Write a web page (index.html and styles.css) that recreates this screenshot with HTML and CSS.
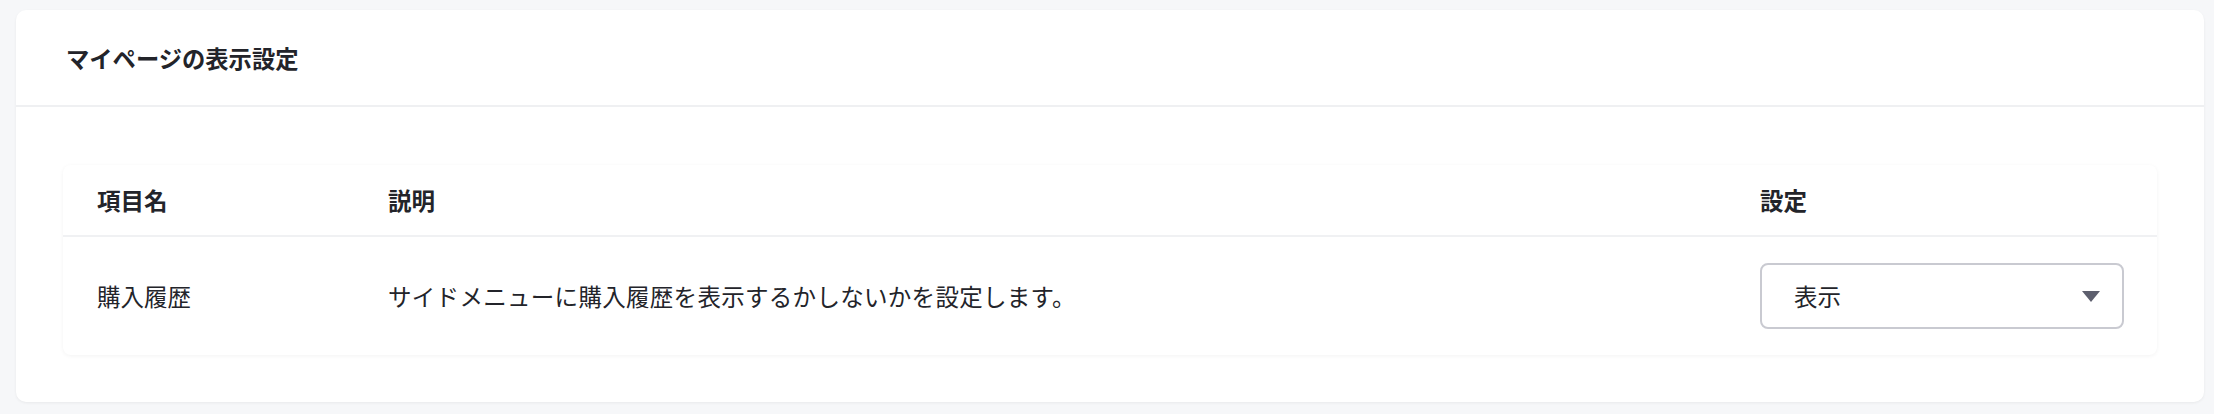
FILE: index.html
```html
<!DOCTYPE html>
<html lang="ja">
<head>
    <meta charset="UTF-8">
    <title>マイページの表示設定</title>
    <link rel="stylesheet" href="styles.css">
</head>
<body>
    <div class="card">
        <div class="card-header">
            <h2>マイページの表示設定</h2>
        </div>
        <div class="card-body">
            <div class="table">
                <div class="row head">
                    <div class="cell">項目名</div>
                    <div class="cell">説明</div>
                    <div class="cell">設定</div>
                </div>
                <div class="row">
                    <div class="cell">購入履歴</div>
                    <div class="cell desc">サイドメニューに購入履歴を表示するかしないかを設定します。</div>
                    <div class="cell">
                        <div class="select">
                            <span>表示</span>
                            <svg class="caret" width="18" height="11" viewBox="0 0 18 11"><path d="M0 0h18L9 11z" fill="#5d5f6e"/></svg>
                        </div>
                    </div>
                </div>
            </div>
        </div>
    </div>
</body>
</html>
```

FILE: styles.css
```css
body {
    margin: 0;
    padding: 10px 10px 12px 16px;
    background-color: #f6f7f9;
    font-family: "Noto Sans CJK JP", "Liberation Sans", sans-serif;
    color: #23242a;
}
.card {
    background-color: #ffffff;
    border-radius: 10px;
    box-shadow: 0 1px 3px rgba(0, 0, 0, 0.06);
}
.card-header {
    height: 95px;
    padding-left: 50px;
    display: flex;
    align-items: center;
    border-bottom: 2px solid #eff0f2;
}
.card-header h2 {
    margin: 0;
    font-size: 23.3px;
    font-weight: bold;
}
.card-body {
    padding: 58px 47px 47px;
}
.table {
    border-radius: 8px;
    box-shadow: 0 1px 4px rgba(0, 0, 0, 0.05);
}
.row {
    display: grid;
    grid-template-columns: 291px 1372px 1fr;
    align-items: center;
    padding-left: 34px;
    height: 118px;
    font-size: 23.5px;
}
.row.head {
    height: 70px;
    font-weight: bold;
    border-bottom: 2px solid #f0f1f3;
}
.desc {
    letter-spacing: 0.3px;
}
.select {
    box-sizing: border-box;
    width: 364px;
    height: 66px;
    border: 2px solid #c9cad1;
    border-radius: 8px;
    display: flex;
    align-items: center;
    justify-content: space-between;
    padding: 0 22px 0 32px;
}
```
